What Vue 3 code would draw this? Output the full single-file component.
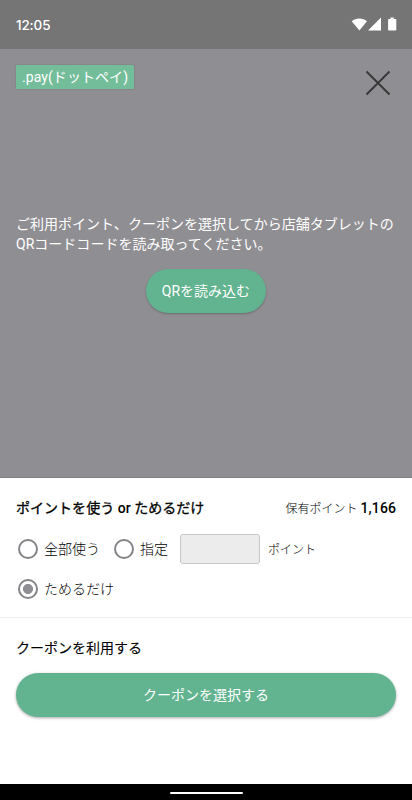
<script setup>
import { ref } from 'vue'

const mode = ref('save')
</script>

<template>
  <div class="screen">
    <header class="status">
      <span class="clock">12:05</span>
      <svg class="status-icons" width="46" height="16" viewBox="0 0 46 16" fill="#fff">
        <path d="M0.7 4.3C5 0.6 11.6 0.6 16 4.3L8.4 13.5Z" />
        <path d="M30 0.6V13.5H17Z" />
        <path d="M37.9 2h1.6V0.6h3.4V2h1.6q0.8 0 0.8 0.8v9.9q0 0.8-0.8 0.8h-6.6q-0.8 0-0.8-0.8V2.8q0-0.8 0.8-0.8Z" />
      </svg>
    </header>

    <main class="scanner">
      <div class="top">
        <span class="badge">.pay(ドットペイ)</span>
        <svg class="close" width="26" height="26" viewBox="0 0 26 26">
          <path d="M1.5 1.5L24.5 24.5M24.5 1.5L1.5 24.5" fill="none" stroke="#393939" stroke-width="2" />
        </svg>
      </div>
      <p class="guide">ご利用ポイント、クーポンを選択してから店舗タブレットの<br />QRコードコードを読み取ってください。</p>
      <button class="pill scan">QRを読み込む</button>
    </main>

    <section class="points">
      <div class="heading-row">
        <h2 class="strong">ポイントを使う <span class="latin">or</span> ためるだけ</h2>
        <span class="owned">保有ポイント <b>1,166</b></span>
      </div>
      <div class="options">
        <label class="all"><input v-model="mode" type="radio" value="all" />全部使う</label>
        <label><input v-model="mode" type="radio" value="some" />指定</label>
        <input class="amount" type="text" disabled />
        <span class="unit">ポイント</span>
      </div>
      <div class="options second">
        <label><input v-model="mode" type="radio" value="save" />ためるだけ</label>
      </div>
    </section>

    <section class="coupon">
      <h2>クーポンを利用する</h2>
      <button class="pill wide">クーポンを選択する</button>
    </section>

    <footer class="nav"><span class="handle"></span></footer>
  </div>
</template>

<style>
body {
  margin: 0;
}
</style>

<style scoped>
.screen {
  width: 412px;
  height: 800px;
  display: flex;
  flex-direction: column;
  overflow: hidden;
  background: #fff;
  color: #000;
  font: 14px/20px Roboto, "Noto Sans CJK JP", sans-serif;
}
.status {
  height: 49px;
  box-sizing: border-box;
  padding: 0 15px 0 16px;
  display: flex;
  align-items: center;
  justify-content: space-between;
  background: #757575;
}
.status-icons {
  margin-top: 1px;
}
.clock {
  color: #fff;
  font: 500 13.5px/20px Inter, Roboto, sans-serif;
  letter-spacing: -0.15px;
}
.scanner {
  height: 429px;
  box-sizing: border-box;
  padding: 16px 16px 0;
  display: flex;
  flex-direction: column;
  align-items: center;
  background: #8f8e93;
  border-bottom: 1px solid #808084;
}
.top {
  width: 100%;
  height: 149px;
  display: flex;
  justify-content: space-between;
  align-items: flex-start;
}
.badge {
  height: 24px;
  box-sizing: border-box;
  padding: 2px 6px;
  border-radius: 1px;
  background: #74bd9a;
  color: #fff;
  letter-spacing: 0.07px;
  white-space: nowrap;
  box-shadow: 0 0 2px rgba(0, 0, 0, 0.2);
}
.close {
  margin: 5px 5px 0 0;
}
.guide {
  width: 100%;
  margin: 0;
  color: #fff;
  letter-spacing: 0.02px;
  white-space: nowrap;
}
.pill {
  height: 44px;
  padding: 0 16px;
  border: 0;
  border-radius: 22px;
  background: #62b38f;
  color: #fff;
  font: inherit;
  box-shadow: 0 1px 3px rgba(0, 0, 0, 0.35);
}
.scan {
  margin-top: 15px;
  width: 120px;
  padding: 0;
  white-space: nowrap;
  box-shadow: 0 1px 2px rgba(0, 0, 0, 0.25);
}
.points {
  height: 140px;
  box-sizing: border-box;
  padding: 20px 16px 0;
  border-bottom: 1px solid #ededed;
}
h2 {
  margin: 0;
  font: inherit;
  -webkit-text-stroke: 0.1px currentColor;
}
.strong {
  letter-spacing: 0.03px;
  -webkit-text-stroke: 0.3px currentColor;
}
.latin {
  font-weight: 500;
  -webkit-text-stroke: 0;
}
.heading-row {
  height: 20px;
  display: flex;
  justify-content: space-between;
}
.owned {
  font-size: 12px;
  font-weight: 300;
}
.owned b {
  font-size: 14px;
  font-weight: 500;
  letter-spacing: 0.1px;
}
.options {
  height: 30px;
  margin-top: 16px;
  display: flex;
  align-items: center;
}
.options.second {
  margin-top: 10px;
}
label {
  display: flex;
  align-items: center;
  font-weight: 300;
}
.all {
  margin-right: 12px;
}
input[type="radio"] {
  appearance: none;
  width: 20px;
  height: 20px;
  box-sizing: border-box;
  margin: 0 6px 0 2px;
  border: 2px solid #858489;
  border-radius: 50%;
  background: #fff;
}
input[type="radio"]:checked {
  background: radial-gradient(circle, #8f8e93 4.7px, #fff 5.3px);
}
.amount {
  width: 80px;
  height: 30px;
  box-sizing: border-box;
  margin: 0 8px 0 12px;
  border: 1px solid #c8c7cc;
  border-radius: 3px;
  background: #ececec;
}
.unit {
  padding-top: 2px;
  font-size: 12px;
  font-weight: 300;
}
.coupon {
  flex: 1;
  padding: 20px 16px 0;
}
.wide {
  display: block;
  width: 100%;
  margin-top: 15px;
}
.nav {
  height: 16px;
  display: flex;
  align-items: center;
  justify-content: center;
  background: #000;
}
.handle {
  width: 73px;
  height: 2px;
  margin-top: 2px;
  border-radius: 1px;
  background: #fff;
}
</style>
